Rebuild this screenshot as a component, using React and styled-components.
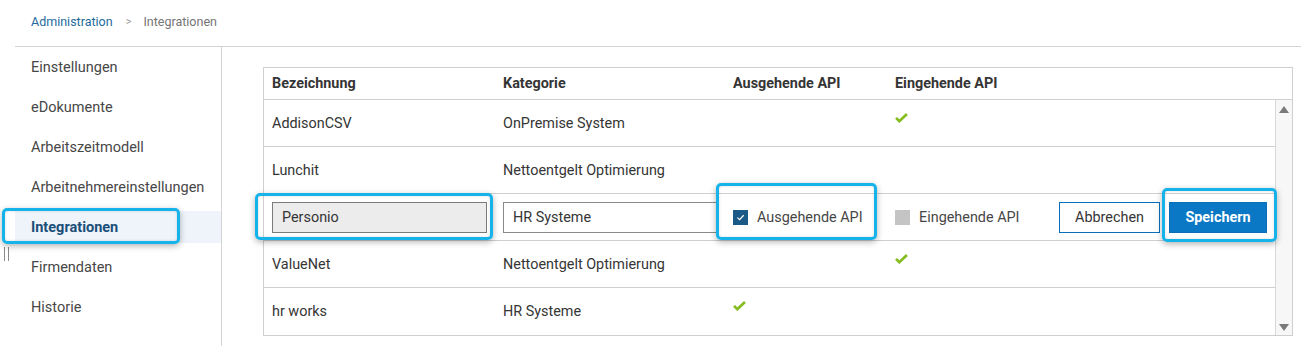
import React from "react";
import styled, { createGlobalStyle } from "styled-components";

const GlobalStyle = createGlobalStyle`
  body {
    margin: 0;
    background: #fff;
    font-family: Roboto, "Noto Sans", sans-serif;
    color: #353535;
  }
`;

const menuData = [
  "Einstellungen",
  "eDokumente",
  "Arbeitszeitmodell",
  "Arbeitnehmereinstellungen",
  "Integrationen",
  "Firmendaten",
  "Historie",
];

const rowsTop = [
  { name: "AddisonCSV", category: "OnPremise System", out: false, in: true },
  { name: "Lunchit", category: "Nettoentgelt Optimierung", out: false, in: false },
];

const rowsBottom = [
  { name: "ValueNet", category: "Nettoentgelt Optimierung", out: false, in: true },
  { name: "hr works", category: "HR Systeme", out: true, in: false },
];

const Check = () => (
  <CheckIcon viewBox="0 0 14 11" width="13" height="10">
    <path d="M1 5.4 L4.6 9 L13 1.2" fill="none" stroke="#85bc20" strokeWidth="3" />
  </CheckIcon>
);

const DataRow = ({ row }) => (
  <Row>
    <Cell>{row.name}</Cell>
    <Cell>{row.category}</Cell>
    <Cell $top>{row.out && <Check />}</Cell>
    <Cell $top>{row.in && <Check />}</Cell>
    <Cell />
  </Row>
);

const App = () => {
  return (
    <Page>
      <GlobalStyle />
      <Breadcrumb>
        <Crumb href="#">Administration</Crumb>
        <Separator>&gt;</Separator>
        <CurrentCrumb>Integrationen</CurrentCrumb>
      </Breadcrumb>
      <Layout>
        <Handle />
        <Sidebar>
          {menuData.map((item) => (
            <NavItem key={item} $active={item === "Integrationen"}>
              {item}
              {item === "Integrationen" && <Highlight $l={-13} $r={41} $t={-3} $b={-1} />}
            </NavItem>
          ))}
        </Sidebar>
        <Content>
          <Table>
            <HeaderRow>
              <HeadCell>Bezeichnung</HeadCell>
              <HeadCell>Kategorie</HeadCell>
              <HeadCell>Ausgehende API</HeadCell>
              <HeadCell>Eingehende API</HeadCell>
              <HeadCell />
            </HeaderRow>
            <Body>
              <Rows>
                {rowsTop.map((row) => (
                  <DataRow key={row.name} row={row} />
                ))}
                <Row>
                  <Cell>
                    <Input $disabled>Personio</Input>
                    <Highlight $l={-9} $r={2} $t={-1} $b={0} />
                  </Cell>
                  <Cell>
                    <Input $wide>HR Systeme</Input>
                  </Cell>
                  <Cell>
                    <CheckLabel>
                      <Box $checked>
                        <svg viewBox="0 0 10 10" width="9" height="9">
                          <path d="M1.5 5.2 L4 7.5 L8.5 2.5" fill="none" stroke="#fff" strokeWidth="1.3" />
                        </svg>
                      </Box>
                      Ausgehende API
                    </CheckLabel>
                    <Highlight $l={-9} $r={10} $t={-11} $b={0} />
                  </Cell>
                  <Cell>
                    <CheckLabel>
                      <Box />
                      Eingehende API
                    </CheckLabel>
                  </Cell>
                  <ActionCell>
                    <Button>Abbrechen</Button>
                    <Button $primary>
                      Speichern
                      <Highlight $l={-8} $r={-11} $t={-15} $b={-10} />
                    </Button>
                  </ActionCell>
                </Row>
                {rowsBottom.map((row) => (
                  <DataRow key={row.name} row={row} />
                ))}
              </Rows>
              <Scrollbar>
                <Arrow />
                <Arrow $down />
              </Scrollbar>
            </Body>
          </Table>
        </Content>
      </Layout>
    </Page>
  );
};

export default App;

const Page = styled.div`
  width: 1301px;
  height: 346px;
  overflow: hidden;
`;

const Breadcrumb = styled.div`
  height: 46px;
  display: flex;
  align-items: center;
  padding: 0 0 4px 31px;
  box-sizing: border-box;
  font-size: 12.5px;
`;

const Crumb = styled.a`
  color: #1e6a9c;
  text-decoration: none;
`;

const Separator = styled.span`
  color: #9a9a9a;
  margin: 0 12px 0 13px;
  font-size: 11px;
`;

const CurrentCrumb = styled.span`
  color: #757575;
`;

const Layout = styled.div`
  position: relative;
  display: flex;
  margin-left: 15px;
  border-top: 1px solid #d4d4d4;
  height: 300px;
`;

const Handle = styled.div`
  position: absolute;
  left: -11px;
  top: 200px;
  width: 3px;
  height: 14px;
  border-left: 1px solid #8a8a8a;
  border-right: 1px solid #8a8a8a;
`;

const Sidebar = styled.nav`
  width: 207px;
  flex-shrink: 0;
  border-right: 1px solid #d4d4d4;
  padding-top: 4px;
  box-sizing: border-box;
`;

const NavItem = styled.div`
  position: relative;
  height: 32px;
  margin-bottom: 8px;
  display: flex;
  align-items: center;
  padding-left: 16px;
  font-size: 14.5px;
  color: ${(p) => (p.$active ? "#1b4f7a" : "#474747")};
  font-weight: ${(p) => (p.$active ? 700 : 400)};
  background: ${(p) => (p.$active ? "#eef4f9" : "transparent")};
`;

const Content = styled.main`
  flex: 1;
  padding: 20px 8px 0 41px;
`;

const Table = styled.div`
  border: 1px solid #cfcfcf;
  font-size: 14.4px;
  color: #353535;
`;

const columns = "231px 230px 162px 160px 1fr";

const HeaderRow = styled.div`
  display: grid;
  grid-template-columns: ${columns};
  height: 31px;
  border-bottom: 1px solid #cfcfcf;
`;

const HeadCell = styled.div`
  display: flex;
  align-items: center;
  padding-left: 8px;
  font-weight: 700;
  color: #353535;
`;

const Body = styled.div`
  display: flex;
`;

const Rows = styled.div`
  flex: 1;
`;

const Row = styled.div`
  display: grid;
  grid-template-columns: ${columns};
  height: 46px;
  border-bottom: 1px solid #cfcfcf;

  &:last-child {
    border-bottom: none;
    height: 47px;
  }
`;

const Cell = styled.div`
  position: relative;
  display: flex;
  align-items: ${(p) => (p.$top ? "flex-start" : "center")};
  padding: ${(p) => (p.$top ? "13px 0 0 8px" : "0 0 0 8px")};
  box-sizing: border-box;
  min-width: 0;
`;

const ActionCell = styled.div`
  display: flex;
  align-items: center;
  justify-content: flex-end;
  gap: 9px;
  padding-right: 8px;
`;

const CheckIcon = styled.svg`
  display: block;
`;

const Input = styled.div`
  box-sizing: border-box;
  height: 31px;
  width: ${(p) => (p.$wide ? "215px" : "215px")};
  flex-shrink: 0;
  display: flex;
  align-items: center;
  padding-left: 9px;
  border: 1px solid ${(p) => (p.$disabled ? "#7a7a7a" : "#8a8a8a")};
  background: ${(p) => (p.$disabled ? "#ececec" : "#fff")};
  color: #353535;
`;

const CheckLabel = styled.label`
  display: flex;
  align-items: center;
  gap: 9px;
  color: #474747;
`;

const Box = styled.span`
  width: 15px;
  height: 15px;
  box-sizing: border-box;
  display: flex;
  align-items: center;
  justify-content: center;
  background: ${(p) => (p.$checked ? "#1b5a87" : "#c4c4c4")};
`;

const Button = styled.button`
  position: relative;
  height: 31px;
  width: ${(p) => (p.$primary ? "98px" : "101px")};
  box-sizing: border-box;
  font-family: inherit;
  font-size: 14.4px;
  font-weight: ${(p) => (p.$primary ? 700 : 400)};
  border: 1px solid #0a6fb8;
  background: ${(p) => (p.$primary ? "#0a78c4" : "#fff")};
  color: ${(p) => (p.$primary ? "#fff" : "#353535")};
  padding: 0;
`;

const Scrollbar = styled.div`
  width: 16px;
  flex-shrink: 0;
  background: #f7f7f7;
  border-left: 1px solid #d8d8d8;
  display: flex;
  flex-direction: column;
  justify-content: space-between;
  align-items: center;
  padding: 6px 0 4px;
`;

const Arrow = styled.span`
  width: 0;
  height: 0;
  border-left: 5px solid transparent;
  border-right: 5px solid transparent;
  ${(p) =>
    p.$down ? "border-top: 7px solid #7a7a7a;" : "border-bottom: 7px solid #7a7a7a;"}
`;

const Highlight = styled.span`
  position: absolute;
  left: ${(p) => p.$l}px;
  right: ${(p) => p.$r}px;
  top: ${(p) => p.$t}px;
  bottom: ${(p) => p.$b}px;
  border: 3px solid #16b2ea;
  border-radius: 5px;
  box-shadow: 0 2px 6px rgba(0, 0, 0, 0.3), inset 0 0 3px rgba(0, 0, 0, 0.15);
  pointer-events: none;
  z-index: 2;
`;
